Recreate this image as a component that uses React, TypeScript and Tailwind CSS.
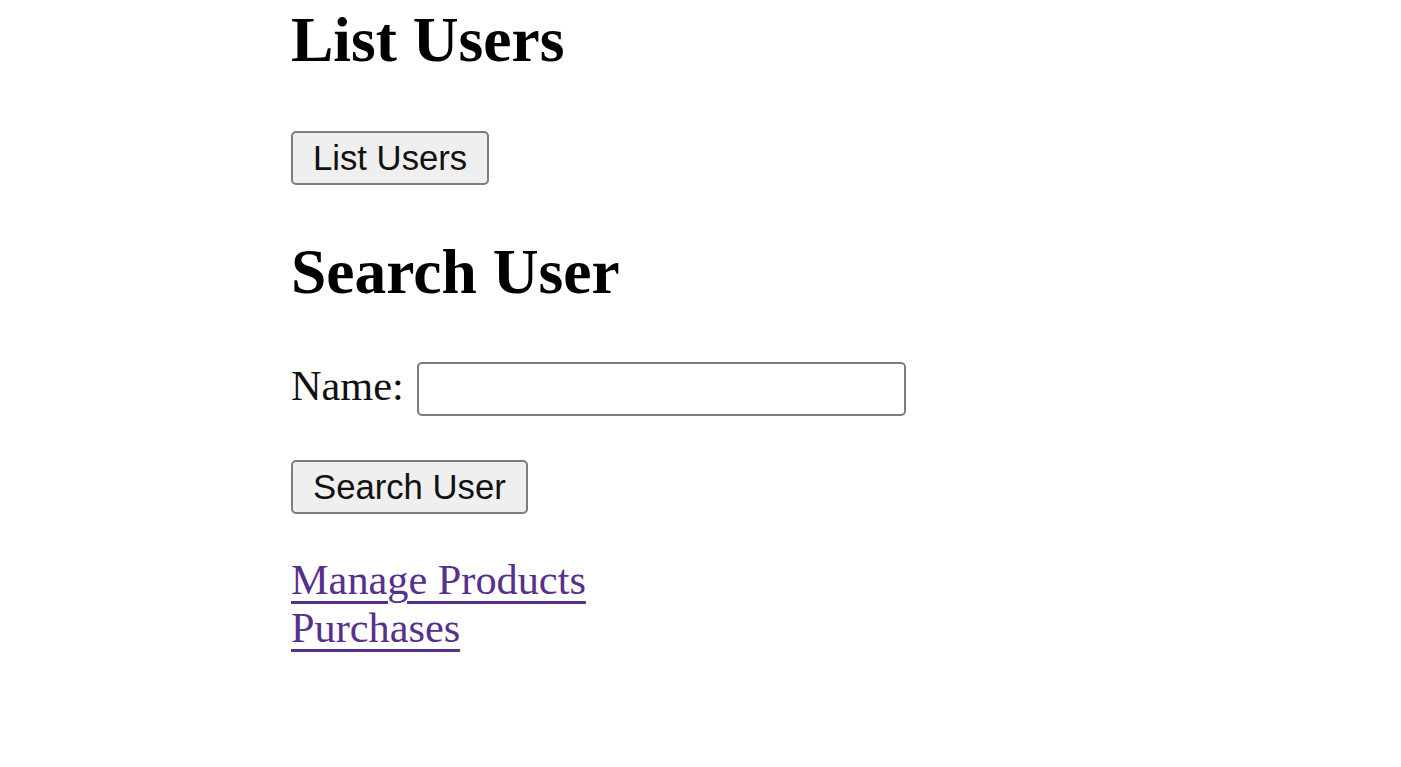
import { useState } from "react";

const serif = "font-['Liberation_Serif','Times_New_Roman',serif]";
const sans = "font-['Liberation_Sans',Arial,sans-serif]";

function PlainButton({ label }: { label: string }) {
  return (
    <button
      type="button"
      className={`${sans} h-[54px] self-start rounded-[5px] border-[2.5px] border-[#7d7d7d] bg-[#efefef] px-5 text-[34.7px] leading-[40px] text-[#111]`}
    >
      {label}
    </button>
  );
}

export default function App() {
  const [name, setName] = useState("");

  return (
    <div className={`${serif} min-h-[767px] w-full bg-white text-black`}>
      <div className="flex flex-col pl-[291px] pt-[4px]">
        {/* List users */}
        <h1 className="text-[63.5px] font-bold leading-[72px]">List Users</h1>
        <div className="mt-[55px] flex">
          <PlainButton label="List Users" />
        </div>

        {/* Search */}
        <h2 className="mt-[51px] text-[63.5px] font-bold leading-[72px]">Search User</h2>
        <div className="mt-[54px] flex items-start">
          <label htmlFor="name" className="text-[42.3px] leading-[48px] text-[#111]">
            Name:
          </label>
          <input
            id="name"
            value={name}
            onChange={(e) => setName(e.target.value)}
            className="ml-[13px] h-[54px] w-[489px] rounded-[5px] border-[2.5px] border-[#7d7d7d] bg-white px-2 text-[34.7px] outline-none"
          />
        </div>
        <div className="mt-[44px] flex">
          <PlainButton label="Search User" />
        </div>

        {/* Links */}
        <div className="mt-[42px] flex flex-col items-start text-[42.3px] leading-[48px]">
          <a href="#" className="text-[#57308c] underline decoration-[2.5px] underline-offset-[7px]">
            Manage Products
          </a>
          <a href="#" className="text-[#57308c] underline decoration-[2.5px] underline-offset-[7px]">
            Purchases
          </a>
        </div>
      </div>
    </div>
  );
}
